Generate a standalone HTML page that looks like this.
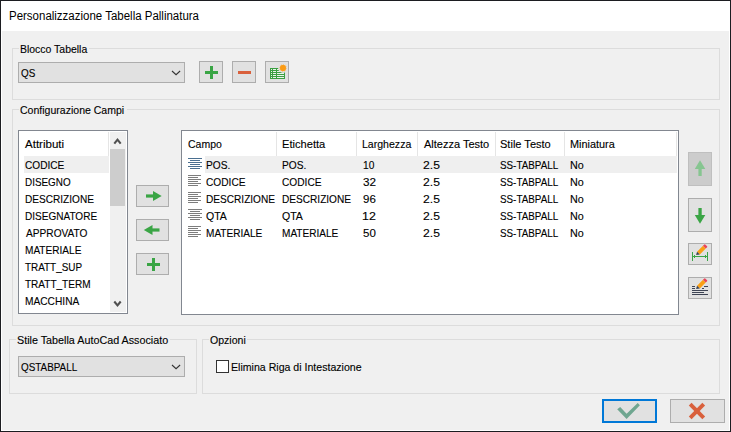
<!DOCTYPE html>
<html><head><meta charset="utf-8"><title>Personalizzazione Tabella Pallinatura</title>
<style>
html,body{margin:0;padding:0;}
body{width:731px;height:432px;overflow:hidden;background:#f0f0f0;position:relative;font-family:"Liberation Sans", sans-serif;}
.a{position:absolute;box-sizing:border-box;}
.t{position:absolute;white-space:pre;-webkit-text-stroke:0.12px #000;line-height:16px;height:16px;transform-origin:0 50%;font-family:"Liberation Sans", sans-serif;}
.gb{position:absolute;box-sizing:border-box;border:1px solid #dcdcdc;}
.gap{position:absolute;background:#f0f0f0;height:3px;}
.btn{position:absolute;box-sizing:border-box;border:1px solid #adadad;background:#e1e1e1;}
.cb{position:absolute;box-sizing:border-box;border:1px solid #adadad;background:#e1e1e1;}
svg{position:absolute;overflow:visible;}
</style></head><body>
<!-- window chrome -->
<div class="a" style="left:0;top:0;width:731px;height:432px;background:#1c1d21;"></div>
<div class="a" style="left:1px;top:1px;width:729px;height:430px;background:#fff;"></div>
<div class="a" style="left:2px;top:31px;width:727px;height:399px;background:#f0f0f0;"></div>

<!-- group boxes -->
<div class="gb" style="left:12px;top:48px;width:708px;height:52px;"></div>
<div class="gap" style="left:19px;top:47px;width:70px;"></div>
<div class="gb" style="left:12px;top:109px;width:708px;height:217px;"></div>
<div class="gap" style="left:19px;top:108px;width:108px;"></div>
<div class="gb" style="left:9px;top:339px;width:188px;height:55px;"></div>
<div class="gap" style="left:16px;top:338px;width:154px;"></div>
<div class="gb" style="left:202px;top:339px;width:518px;height:55px;"></div>
<div class="gap" style="left:209px;top:338px;width:38px;"></div>

<!-- combos -->
<div class="cb" style="left:18px;top:62px;width:167px;height:21px;"></div>
<svg style="left:0;top:0" width="731" height="432"><polyline points="172,71 176.05,74.7 180.1,71" fill="none" stroke="#333" stroke-width="1.1"/></svg>
<div class="cb" style="left:18px;top:356px;width:167px;height:21px;"></div>
<svg style="left:0;top:0" width="731" height="432"><polyline points="172,365 176.05,368.7 180.1,365" fill="none" stroke="#333" stroke-width="1.1"/></svg>

<!-- top buttons -->
<div class="btn" style="left:199px;top:61px;width:24px;height:22px;"></div>
<div class="a" style="left:205px;top:71px;width:13px;height:3px;background:#3aa545;"></div>
<div class="a" style="left:210px;top:66px;width:3px;height:13px;background:#3aa545;"></div>
<div class="btn" style="left:232px;top:61px;width:24px;height:22px;"></div>
<div class="a" style="left:238px;top:71px;width:13px;height:3px;background:#d9603c;"></div>
<div class="btn" style="left:265px;top:61px;width:24px;height:22px;"></div>
<svg style="left:265px;top:61px" width="24" height="22" viewBox="265 61 24 22">
  <rect x="270" y="68" width="15" height="11" fill="#3a9f41"/>
  <g fill="#e9f3e9">
    <rect x="271" y="69" width="1" height="1"/><rect x="271" y="71" width="1" height="1"/><rect x="271" y="73" width="1" height="1"/><rect x="271" y="75" width="1" height="1"/><rect x="271" y="77" width="1" height="1"/>
    <rect x="273" y="69" width="3" height="1"/><rect x="273" y="71" width="3" height="1"/><rect x="273" y="73" width="3" height="1"/><rect x="273" y="75" width="3" height="1"/><rect x="273" y="77" width="3" height="1"/>
    <rect x="277" y="69" width="7" height="1"/><rect x="277" y="71" width="7" height="1"/><rect x="277" y="73" width="7" height="1"/><rect x="277" y="75" width="7" height="1"/><rect x="277" y="77" width="7" height="1"/>
  </g>
  <circle cx="283.0" cy="68.0" r="4.9" fill="#e1e1e1"/>
  <polygon points="286.97,68.52 285.59,69.07 286.18,70.43 284.71,70.22 284.53,71.69 283.37,70.78 282.48,71.97 281.93,70.59 280.57,71.18 280.78,69.71 279.31,69.53 280.22,68.37 279.03,67.48 280.41,66.93 279.82,65.57 281.29,65.78 281.47,64.31 282.63,65.22 283.52,64.03 284.07,65.41 285.43,64.82 285.22,66.29 286.69,66.47 285.78,67.63" fill="#fba62e" fill-opacity="0.85"/>
  <circle cx="283.0" cy="68.0" r="2.9" fill="#fb9b14"/>
</svg>

<!-- attribute list -->
<div class="a" style="left:18px;top:130px;width:110px;height:184px;border:1px solid #828790;background:#fff;"></div>
<div class="a" style="left:108px;top:132px;width:1px;height:24px;background:#e5e5e5;"></div>
<div class="a" style="left:24px;top:156px;width:85px;height:17px;background:#efefef;"></div>
<div class="a" style="left:110px;top:132px;width:16px;height:180px;background:#f0f0f0;"></div>
<div class="a" style="left:110px;top:149px;width:15px;height:57px;background:#cdcdcd;"></div>
<svg style="left:0;top:0" width="731" height="432">
  <polyline points="114.3,143.6 117.5,139.7 120.7,143.6" fill="none" stroke="#505050" stroke-width="2.1"/>
  <polyline points="114.3,301.5 117.5,305.4 120.7,301.5" fill="none" stroke="#505050" stroke-width="2.1"/>
</svg>

<!-- middle arrow buttons -->
<div class="btn" style="left:136px;top:185px;width:33px;height:22px;"></div>
<div class="btn" style="left:136px;top:219px;width:33px;height:22px;"></div>
<div class="btn" style="left:136px;top:253px;width:33px;height:22px;"></div>
<svg style="left:0;top:0" width="731" height="432">
  <g fill="#3aa545">
    <rect x="146" y="194.4" width="8" height="3.2"/>
    <path d="M153 191 L161.7 196 L153 201 Z"/>
    <rect x="151.5" y="228.4" width="8" height="3.2"/>
    <path d="M152.5 225 L143.8 230 L152.5 235 Z"/>
  </g>
</svg>
<div class="a" style="left:147px;top:263px;width:13px;height:3px;background:#3aa545;"></div>
<div class="a" style="left:152px;top:258px;width:3px;height:13px;background:#3aa545;"></div>

<!-- table listview -->
<div class="a" style="left:181px;top:130px;width:498px;height:185px;border:1px solid #828790;background:#fff;"></div>
<div class="a" style="left:205px;top:156px;width:472px;height:17px;background:#efefef;"></div>
<div class="a" style="left:276px;top:132px;width:1px;height:24px;background:#e5e5e5;"></div>
<div class="a" style="left:356px;top:132px;width:1px;height:24px;background:#e5e5e5;"></div>
<div class="a" style="left:417px;top:132px;width:1px;height:24px;background:#e5e5e5;"></div>
<div class="a" style="left:495px;top:132px;width:1px;height:24px;background:#e5e5e5;"></div>
<div class="a" style="left:564px;top:132px;width:1px;height:24px;background:#e5e5e5;"></div>
<div class="a" style="left:676px;top:132px;width:1px;height:24px;background:#e5e5e5;"></div>
<!-- row icons -->
<svg style="left:0;top:0" width="731" height="432" shape-rendering="crispEdges">
  <g fill="#4a6f90">
    <rect x="188" y="158" width="14" height="1"/><rect x="190" y="160" width="10" height="1"/>
    <rect x="188" y="162" width="14" height="1"/><rect x="190" y="164" width="10" height="1"/>
    <rect x="188" y="166" width="14" height="1"/><rect x="190" y="168" width="10" height="1"/>
  </g>
  <g fill="#7d7d7d">
    <rect x="188" y="175" width="13" height="1"/><rect x="188" y="177" width="10" height="1"/>
    <rect x="188" y="179" width="13" height="1"/><rect x="188" y="181" width="10" height="1"/>
    <rect x="188" y="183" width="13" height="1"/><rect x="188" y="185" width="10" height="1"/>

    <rect x="188" y="192" width="13" height="1"/><rect x="188" y="194" width="10" height="1"/>
    <rect x="188" y="196" width="13" height="1"/><rect x="188" y="198" width="10" height="1"/>
    <rect x="188" y="200" width="13" height="1"/><rect x="188" y="202" width="10" height="1"/>

    <rect x="188" y="209" width="14" height="1"/><rect x="190" y="211" width="10" height="1"/>
    <rect x="188" y="213" width="14" height="1"/><rect x="190" y="215" width="10" height="1"/>
    <rect x="188" y="217" width="14" height="1"/><rect x="190" y="219" width="10" height="1"/>

    <rect x="188" y="226" width="13" height="1"/><rect x="188" y="228" width="10" height="1"/>
    <rect x="188" y="230" width="13" height="1"/><rect x="188" y="232" width="10" height="1"/>
    <rect x="188" y="234" width="13" height="1"/><rect x="188" y="236" width="10" height="1"/>
  </g>
</svg>

<!-- right side buttons -->
<div class="a" style="left:688px;top:152px;width:24px;height:34px;border:1px solid #bfbfbf;background:#cccccc;"></div>
<div class="btn" style="left:688px;top:198px;width:24px;height:34px;"></div>
<div class="btn" style="left:688px;top:243px;width:24px;height:22px;"></div>
<div class="btn" style="left:688px;top:277px;width:24px;height:22px;"></div>
<svg style="left:0;top:0" width="731" height="432">
  <g fill="#86c590">
    <rect x="698.4" y="168" width="3.3" height="8"/>
    <path d="M700 160.2 L705.3 169 L694.8 169 Z"/>
  </g>
  <g fill="#3aa545">
    <rect x="698.4" y="208" width="3.3" height="8"/>
    <path d="M700 223.7 L705.3 215 L694.8 215 Z"/>
  </g>
  <!-- edit A: dimension + pencil -->
  <g fill="#3aa545" shape-rendering="crispEdges">
    <rect x="692" y="252" width="1" height="9"/>
    <rect x="707" y="252" width="1" height="9"/>
    <rect x="692" y="256" width="16" height="1"/>
    <rect x="694" y="255" width="1" height="3"/>
    <rect x="705" y="255" width="1" height="3"/>
  </g>
  <g id="pencil">
    <path d="M696.10 254.90 L697.07 251.67 L704.32 244.42 L705.22 244.42 L707.08 246.28 L707.08 247.18 L699.83 254.43 Z" fill="#e4e2df" stroke="#e4e2df" stroke-width="1.4" stroke-linejoin="round"/>
    <path d="M697.07 251.67 L702.97 245.77 L705.73 248.53 L699.83 254.43 Z" fill="#fb9f14"/>
    <path d="M702.97 245.77 L704.32 244.42 Q704.77 243.97 705.22 244.42 L707.08 246.28 Q707.53 246.73 707.08 247.18 L705.73 248.53 Z" fill="#e8465b"/>
    <path d="M696.10 254.90 L697.07 251.67 L699.83 254.43 Z" fill="#3b4252"/>
  </g>
  <!-- edit B: text lines + pencil -->
  <g fill="#3e4454" shape-rendering="crispEdges">
    <rect x="692" y="286" width="3" height="1"/><rect x="704" y="286" width="4" height="1"/>
    <rect x="692" y="288" width="3" height="1"/><rect x="702" y="288" width="2" height="1"/>
    <rect x="692" y="290" width="16" height="1"/>
    <rect x="692" y="292" width="12" height="1"/>
    <rect x="692" y="294" width="16" height="1"/>
  </g>
  <g>
    <path d="M696.10 288.90 L697.07 285.67 L704.32 278.42 L705.22 278.42 L707.08 280.28 L707.08 281.18 L699.83 288.43 Z" fill="#e4e2df" stroke="#e4e2df" stroke-width="1.4" stroke-linejoin="round"/>
    <path d="M697.07 285.67 L702.97 279.77 L705.73 282.53 L699.83 288.43 Z" fill="#fb9f14"/>
    <path d="M702.97 279.77 L704.32 278.42 Q704.77 277.97 705.22 278.42 L707.08 280.28 Q707.53 280.73 707.08 281.18 L705.73 282.53 Z" fill="#e8465b"/>
    <path d="M696.10 288.90 L697.07 285.67 L699.83 288.43 Z" fill="#3b4252"/>
  </g>
</svg>

<!-- checkbox -->
<div class="a" style="left:216px;top:360px;width:13px;height:13px;border:1px solid #333;background:#fff;"></div>

<!-- OK / Cancel -->
<div class="a" style="left:602px;top:399px;width:55px;height:24px;border:2px solid #0078d7;background:#e1e1e1;"></div>
<div class="btn" style="left:670px;top:399px;width:55px;height:24px;"></div>
<svg style="left:0;top:0" width="731" height="432">
  <path d="M617.2 409.3 L620.2 407 L626.6 413.8 L637.7 403.1 L639.9 405.3 L626.6 419 Z" fill="#6fa690"/>
  <g stroke="#d9603c" stroke-width="3.9" fill="none">
    <line x1="690.18" y1="404.23" x2="703.72" y2="417.77"/>
    <line x1="703.72" y1="404.23" x2="690.18" y2="417.77"/>
  </g>
</svg>

<div class="t" style="left:8.53px;top:7.64px;font-size:12px;color:#000;-webkit-text-stroke:0;transform:scaleX(0.9569)">Personalizzazione Tabella Pallinatura</div>
<div class="t" style="left:20.01px;top:40.69px;font-size:11px;color:#000;transform:scaleX(0.9507)">Blocco Tabella</div>
<div class="t" style="left:21.18px;top:65.39px;font-size:11px;color:#000;transform:scaleX(0.8984)">QS</div>
<div class="t" style="left:20.00px;top:101.89px;font-size:11px;color:#000;transform:scaleX(0.9574)">Configurazione Campi</div>
<div class="t" style="left:25.46px;top:135.89px;font-size:11px;color:#000;transform:scaleX(1.0498)">Attributi</div>
<div class="t" style="left:25.22px;top:156.79px;font-size:11px;color:#000;transform:scaleX(0.9183)">CODICE</div>
<div class="t" style="left:25.05px;top:173.79px;font-size:11px;color:#000;transform:scaleX(0.8986)">DISEGNO</div>
<div class="t" style="left:25.04px;top:190.79px;font-size:11px;color:#000;transform:scaleX(0.9163)">DESCRIZIONE</div>
<div class="t" style="left:25.04px;top:207.79px;font-size:11px;color:#000;transform:scaleX(0.9116)">DISEGNATORE</div>
<div class="t" style="left:25.50px;top:224.79px;font-size:11px;color:#000;transform:scaleX(0.9228)">APPROVATO</div>
<div class="t" style="left:25.04px;top:241.79px;font-size:11px;color:#000;transform:scaleX(0.9163)">MATERIALE</div>
<div class="t" style="left:25.36px;top:258.79px;font-size:11px;color:#000;transform:scaleX(0.9004)">TRATT_SUP</div>
<div class="t" style="left:25.35px;top:275.79px;font-size:11px;color:#000;transform:scaleX(0.9111)">TRATT_TERM</div>
<div class="t" style="left:25.03px;top:292.79px;font-size:11px;color:#000;transform:scaleX(0.9251)">MACCHINA</div>
<div class="t" style="left:188.10px;top:135.89px;font-size:11px;color:#000;transform:scaleX(0.9531)">Campo</div>
<div class="t" style="left:281.76px;top:135.89px;font-size:11px;color:#000;transform:scaleX(1.0115)">Etichetta</div>
<div class="t" style="left:361.80px;top:135.89px;font-size:11px;color:#000;transform:scaleX(0.9591)">Larghezza</div>
<div class="t" style="left:423.57px;top:135.89px;font-size:11px;color:#000;transform:scaleX(1.0002)">Altezza Testo</div>
<div class="t" style="left:499.86px;top:135.89px;font-size:11px;color:#000;transform:scaleX(1.0042)">Stile Testo</div>
<div class="t" style="left:569.78px;top:135.89px;font-size:11px;color:#000;transform:scaleX(0.9896)">Miniatura</div>
<div class="t" style="left:205.83px;top:156.79px;font-size:11px;color:#000;transform:scaleX(0.9245)">POS.</div>
<div class="t" style="left:281.93px;top:156.79px;font-size:11px;color:#000;transform:scaleX(0.9245)">POS.</div>
<div class="t" style="left:363.01px;top:156.79px;font-size:11px;color:#000;transform:scaleX(0.9266)">10</div>
<div class="t" style="left:423.44px;top:156.79px;font-size:11px;color:#000;transform:scaleX(1.1038)">2.5</div>
<div class="t" style="left:499.94px;top:156.79px;font-size:11px;color:#000;transform:scaleX(0.8943)">SS-TABPALL</div>
<div class="t" style="left:569.89px;top:156.79px;font-size:11px;color:#000;transform:scaleX(0.9778)">No</div>
<div class="t" style="left:206.02px;top:173.79px;font-size:11px;color:#000;transform:scaleX(0.9231)">CODICE</div>
<div class="t" style="left:282.12px;top:173.79px;font-size:11px;color:#000;transform:scaleX(0.9231)">CODICE</div>
<div class="t" style="left:362.70px;top:173.79px;font-size:11px;color:#000;transform:scaleX(1.0637)">32</div>
<div class="t" style="left:423.44px;top:173.79px;font-size:11px;color:#000;transform:scaleX(1.1038)">2.5</div>
<div class="t" style="left:499.94px;top:173.79px;font-size:11px;color:#000;transform:scaleX(0.8943)">SS-TABPALL</div>
<div class="t" style="left:569.89px;top:173.79px;font-size:11px;color:#000;transform:scaleX(0.9778)">No</div>
<div class="t" style="left:205.84px;top:190.79px;font-size:11px;color:#000;transform:scaleX(0.9176)">DESCRIZIONE</div>
<div class="t" style="left:281.94px;top:190.79px;font-size:11px;color:#000;transform:scaleX(0.9176)">DESCRIZIONE</div>
<div class="t" style="left:362.77px;top:190.79px;font-size:11px;color:#000;transform:scaleX(1.0443)">96</div>
<div class="t" style="left:423.44px;top:190.79px;font-size:11px;color:#000;transform:scaleX(1.1038)">2.5</div>
<div class="t" style="left:499.94px;top:190.79px;font-size:11px;color:#000;transform:scaleX(0.8943)">SS-TABPALL</div>
<div class="t" style="left:569.89px;top:190.79px;font-size:11px;color:#000;transform:scaleX(0.9778)">No</div>
<div class="t" style="left:206.04px;top:207.79px;font-size:11px;color:#000;transform:scaleX(0.9589)">QTA</div>
<div class="t" style="left:282.14px;top:207.79px;font-size:11px;color:#000;transform:scaleX(0.9589)">QTA</div>
<div class="t" style="left:361.95px;top:207.79px;font-size:11px;color:#000;transform:scaleX(1.1283)">12</div>
<div class="t" style="left:423.44px;top:207.79px;font-size:11px;color:#000;transform:scaleX(1.1038)">2.5</div>
<div class="t" style="left:499.94px;top:207.79px;font-size:11px;color:#000;transform:scaleX(0.8943)">SS-TABPALL</div>
<div class="t" style="left:569.89px;top:207.79px;font-size:11px;color:#000;transform:scaleX(0.9778)">No</div>
<div class="t" style="left:205.84px;top:224.79px;font-size:11px;color:#000;transform:scaleX(0.9147)">MATERIALE</div>
<div class="t" style="left:281.94px;top:224.79px;font-size:11px;color:#000;transform:scaleX(0.9147)">MATERIALE</div>
<div class="t" style="left:362.70px;top:224.79px;font-size:11px;color:#000;transform:scaleX(1.0477)">50</div>
<div class="t" style="left:423.44px;top:224.79px;font-size:11px;color:#000;transform:scaleX(1.1038)">2.5</div>
<div class="t" style="left:499.94px;top:224.79px;font-size:11px;color:#000;transform:scaleX(0.8943)">SS-TABPALL</div>
<div class="t" style="left:569.89px;top:224.79px;font-size:11px;color:#000;transform:scaleX(0.9778)">No</div>
<div class="t" style="left:17.08px;top:331.69px;font-size:11px;color:#000;transform:scaleX(0.9786)">Stile Tabella AutoCad Associato</div>
<div class="t" style="left:21.08px;top:359.19px;font-size:11px;color:#000;transform:scaleX(0.8981)">QSTABPALL</div>
<div class="t" style="left:210.24px;top:331.69px;font-size:11px;color:#000;transform:scaleX(0.9599)">Opzioni</div>
<div class="t" style="left:230.90px;top:358.79px;font-size:11px;color:#000;transform:scaleX(0.9621)">Elimina Riga di Intestazione</div>
</body></html>
